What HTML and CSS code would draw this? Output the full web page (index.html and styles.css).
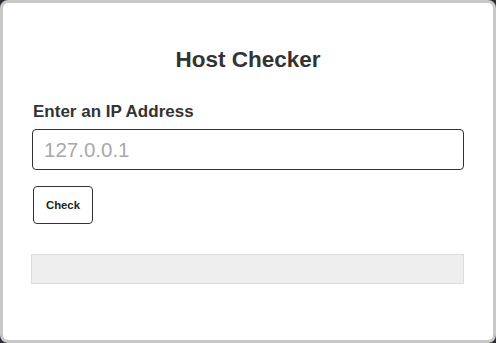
FILE: index.html
```html
<html>
  <head>
    <link rel="stylesheet" href="styles.css">
  </head>
  <body>
    <main class="card">
      <h1 class="title">Host Checker</h1>
      <label class="field-label" for="ip-input">Enter an IP Address</label>
      <input id="ip-input" class="field" type="text" placeholder="127.0.0.1">
      <button id="check-btn" class="check-button">Check</button>
      <div id="result" class="result"></div>
    </main>
  </body>
</html>
```

FILE: styles.css
```css
html, body {
  margin: 0;
  height: 100%;
}
body {
  background: #2d2d38;
  font-family: "Liberation Sans", Arial, sans-serif;
  color: #333;
}
.card {
  box-sizing: border-box;
  height: 343px;
  display: flex;
  flex-direction: column;
  align-items: flex-start;
  padding: 0 29px;
  background: #fff;
  border: 3px solid #c8c8c8;
  border-radius: 8px;
}
.title {
  align-self: stretch;
  margin: 44px 0 0;
  font-size: 22.5px;
  line-height: 26px;
  text-align: center;
  color: #333;
}
.field-label {
  margin: 29px 0 0 1px;
  font-size: 17px;
  line-height: 20px;
  font-weight: bold;
  color: #333;
}
.field {
  box-sizing: border-box;
  align-self: stretch;
  height: 41px;
  margin: 7px 0 0;
  padding: 0 11px;
  font-family: inherit;
  font-size: 20.5px;
  color: #333;
  border: 1.5px solid #333;
  border-radius: 4px;
  outline: none;
}
.field::placeholder {
  color: #a9a9a9;
}
.check-button {
  box-sizing: border-box;
  width: 60px;
  height: 38px;
  margin: 16px 0 0 1px;
  padding: 0;
  font-family: inherit;
  font-size: 11.3px;
  font-weight: bold;
  color: #222;
  background: #fff;
  border: 1px solid #333;
  border-radius: 4px;
}
.result {
  box-sizing: border-box;
  align-self: stretch;
  height: 30px;
  margin: 30px 0 0 -1px;
  background: #eee;
  border: 1px solid #dcdcdc;
}
```
